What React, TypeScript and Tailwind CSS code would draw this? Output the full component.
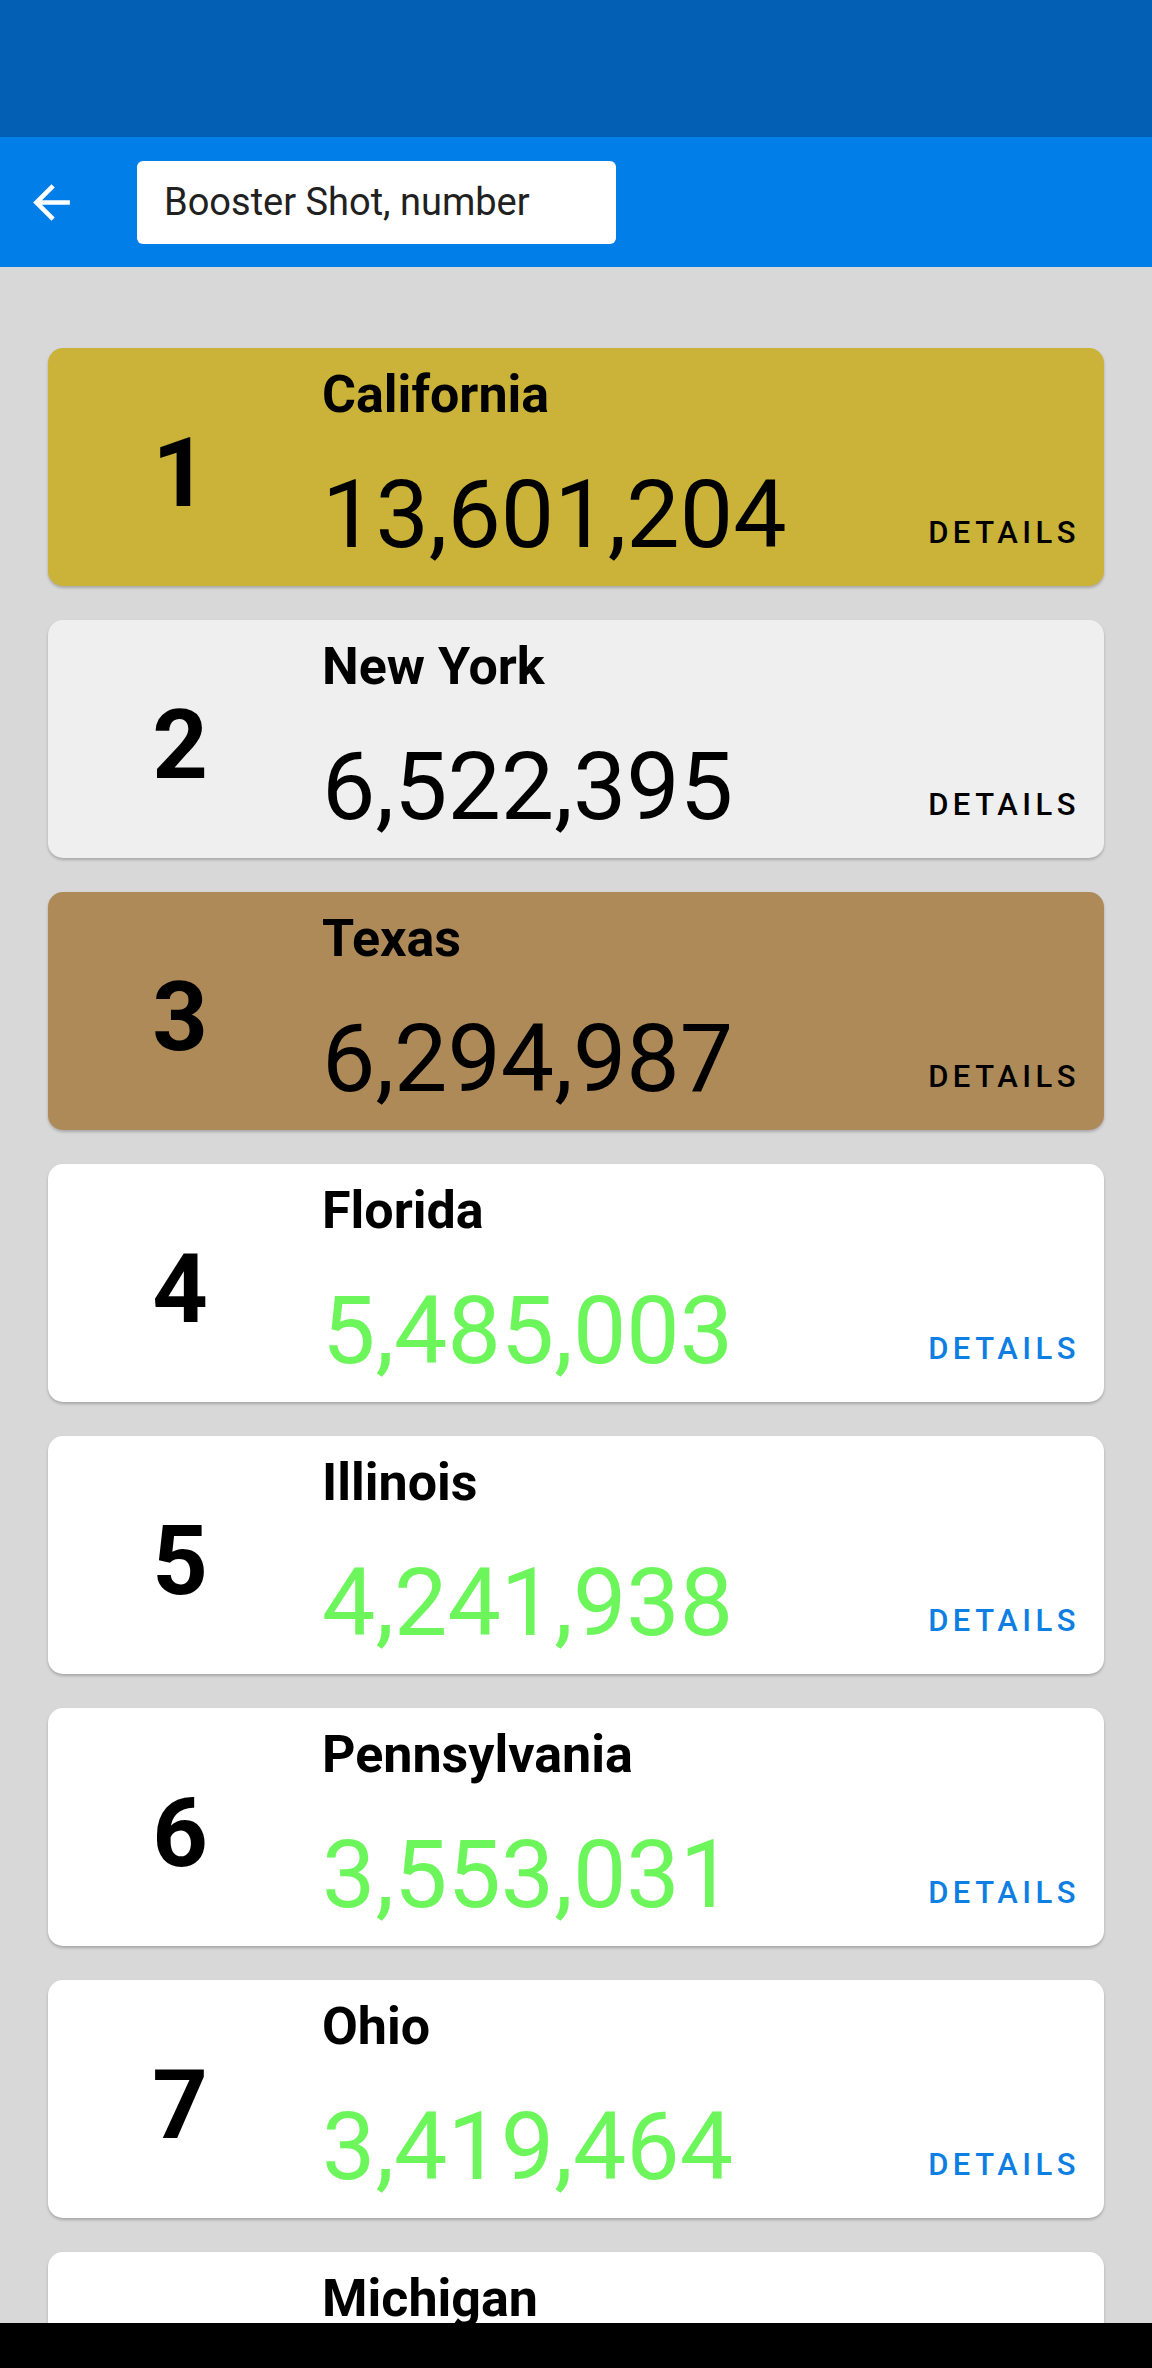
import React from "react";

type Row = { rank: number; name: string; value: string; bg: string; numColor: string; btnColor: string };

const rows: Row[] = [
  { rank: 1, name: "California", value: "13,601,204", bg: "bg-[#cab338]", numColor: "text-black", btnColor: "text-black" },
  { rank: 2, name: "New York", value: "6,522,395", bg: "bg-[#efefef]", numColor: "text-black", btnColor: "text-black" },
  { rank: 3, name: "Texas", value: "6,294,987", bg: "bg-[#ae8a59]", numColor: "text-black", btnColor: "text-black" },
  { rank: 4, name: "Florida", value: "5,485,003", bg: "bg-white", numColor: "text-[#6cf65c]", btnColor: "text-[#0e7fe2]" },
  { rank: 5, name: "Illinois", value: "4,241,938", bg: "bg-white", numColor: "text-[#6cf65c]", btnColor: "text-[#0e7fe2]" },
  { rank: 6, name: "Pennsylvania", value: "3,553,031", bg: "bg-white", numColor: "text-[#6cf65c]", btnColor: "text-[#0e7fe2]" },
  { rank: 7, name: "Ohio", value: "3,419,464", bg: "bg-white", numColor: "text-[#6cf65c]", btnColor: "text-[#0e7fe2]" },
  { rank: 8, name: "Michigan", value: "3,210,784", bg: "bg-white", numColor: "text-[#6cf65c]", btnColor: "text-[#0e7fe2]" },
];

function Card({ r }: { r: Row }) {
  return (
    <div className={`${r.bg} shrink-0 h-[238px] rounded-[15px] shadow-[0_2px_3px_rgba(0,0,0,0.22)] flex`}>
      <div className="w-[264px] shrink-0 flex items-center justify-center pt-[12px]">
        <span className="text-[97px] leading-[97px] font-bold text-black">{r.rank}</span>
      </div>
      <div className="flex-1 ml-[10px] pr-[24px] flex flex-col">
        <div className="pt-[21px] text-[52px] leading-[52px] font-bold text-black">{r.name}</div>
        <div className="mt-[46px] flex items-end justify-between">
          <span className={`${r.numColor} text-[95px] leading-[95px] font-normal`}>{r.value}</span>
          <span className={`${r.btnColor} mb-[14px] text-[31px] leading-[31px] font-medium tracking-[4.5px]`}>DETAILS</span>
        </div>
      </div>
    </div>
  );
}

export default function App() {
  return (
    <div className="w-[1152px] h-[2368px] overflow-hidden flex flex-col bg-[#d8d8d8]" style={{ fontFamily: "Roboto, 'Noto Sans', sans-serif" }}>
      <div className="h-[137px] shrink-0 bg-[#035fb3]" />
      <div className="h-[130px] shrink-0 bg-[#027ee9] flex items-center pl-[24px]">
        <svg width="55" height="55" viewBox="0 0 24 24" fill="white">
          <path d="M20 11H7.83l5.59-5.59L12 4l-8 8 8 8 1.41-1.41L7.83 13H20v-2z" />
        </svg>
        <div className="ml-[58px] w-[479px] h-[83px] rounded-[6px] bg-white flex items-center px-[27px]">
          <span className="text-[38px] leading-[38px] text-[#212121]">Booster Shot, number</span>
        </div>
      </div>
      <div className="flex-1 overflow-hidden px-[48px] pt-[81px] flex flex-col gap-[34px]">
        {rows.map((r) => (
          <Card key={r.rank} r={r} />
        ))}
      </div>
      <div className="h-[45px] shrink-0 bg-black" />
    </div>
  );
}
